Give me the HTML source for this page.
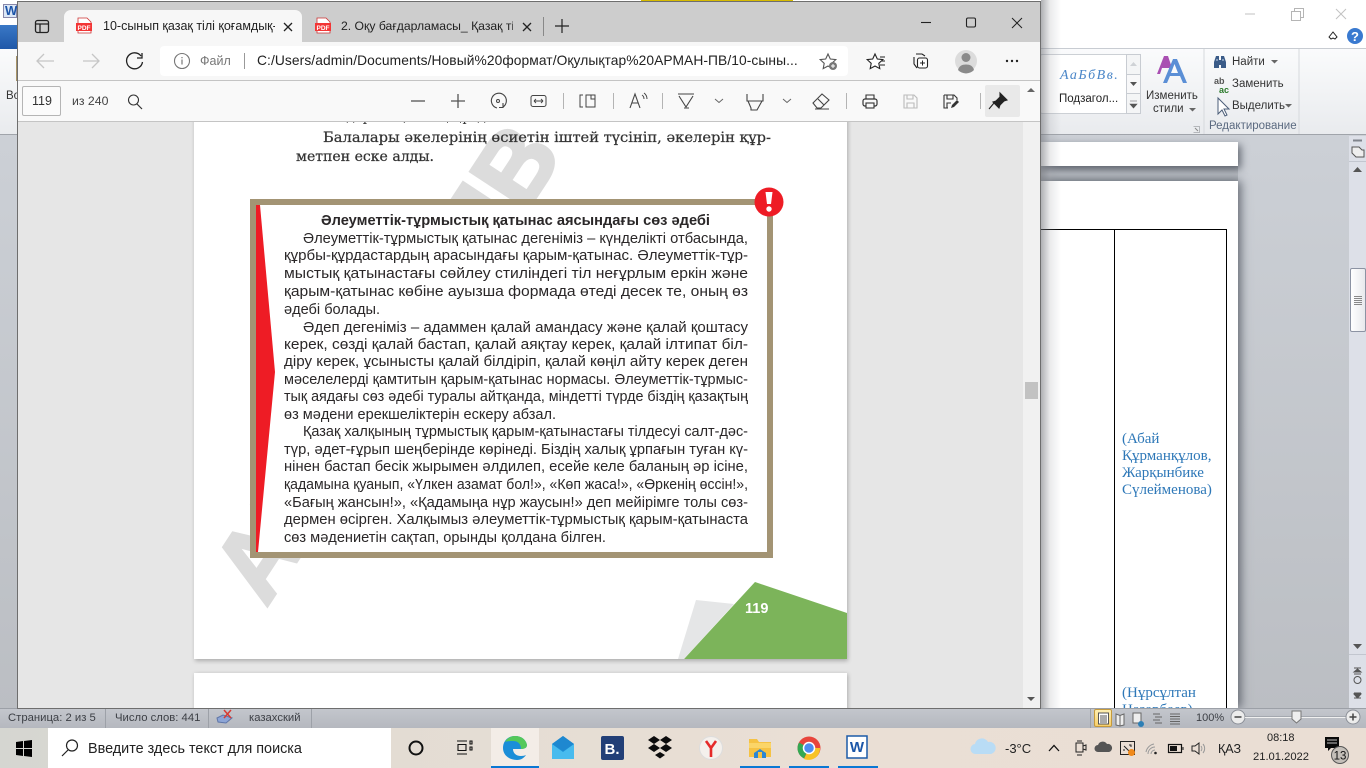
<!DOCTYPE html>
<html lang="kk"><head><meta charset="utf-8"><title>Word and Edge PDF</title>
<style>
html,body{margin:0;padding:0;width:1366px;height:768px;overflow:hidden;background:#c8ccd2;font-family:"Liberation Sans","DejaVu Sans",sans-serif}
div,span{box-sizing:border-box}
.a{position:absolute}
.t{position:absolute;white-space:nowrap;line-height:16px}
svg{position:absolute;overflow:visible}
.bx text{font-family:"Liberation Sans","DejaVu Sans",sans-serif;font-size:14.6px;fill:#2a2728}
</style></head><body>

<!-- WORD BACKGROUND -->
<div class="a" style="left:0;top:0;width:1366px;height:48px;background:#fff"></div>
<div class="a" style="left:0;top:48px;width:1366px;height:87px;background:linear-gradient(#fafbfc,#e9ebee);border-bottom:1px solid #a0a4aa;border-top:1px solid #c8ccd2"></div>
<div class="a" style="left:0;top:135px;width:1366px;height:573px;background:linear-gradient(#ccd0d6,#bbbec3)"></div>

<!-- left part -->
<div class="a" style="left:3px;top:4px;width:14px;height:14px;background:#dbe7f6;border:1px solid #88a;"></div>
<div class="t" style="left:5px;top:3px;font:bold 13px/16px 'Liberation Sans';color:#1c54a8">W</div>
<div class="a" style="left:0;top:25px;width:17px;height:24px;background:linear-gradient(#3a78c6,#1f58a8)"></div>
<div class="a" style="left:16px;top:56px;width:2px;height:25px;background:#a89468"></div>
<div class="t" style="left:6px;top:88px;font-size:11.5px;color:#333">Во</div>

<!-- ribbon right -->
<div class="a" style="left:1040px;top:54px;width:101px;height:60px;background:#fff;border:1px solid #ccd0d5;border-radius:2px"></div>
<div class="a" style="left:1126px;top:54px;width:15px;height:60px;background:#f4f5f6;border:1px solid #c8ccd2"></div>
<div class="a" style="left:1126px;top:74px;width:15px;height:20px;background:#f8f8f9;border:1px solid #c8ccd2"></div>
<svg style="left:0;top:0" width="1" height="1">
<path d="M1130 66l3.500-4 3.500 4z" fill="#cfd2d6"/><path d="M1130 82h7l-3.500 4z" fill="#555"/>
<path d="M1130 101h7M1130 104h7l-3.500 4z" fill="#555" stroke="#555" stroke-width=".6"/>
<path d="M1193.500 126.500h6v6h-6" fill="none" stroke="#b4b7bb"/><path d="M1195 128l3 3" stroke="#888"/>
<path d="M1204 49v85M1299 49v85" stroke="#d6d9dd"/>
<!-- change styles icon -->
<path d="M1157 74l7-18h4l6 18h-3l-2-6h-7l-2 6z" fill="#a94fb2"/>
<path d="M1163 83l10-24h4l10 24h-4l-3-7h-10l-3 7z" fill="#5b8fd6"/>
<path d="M1171 73h7l-3.500-9z" fill="#fafbfc"/>
<path d="M1189 108h7l-3.500 3.500z" fill="#666"/>
<!-- binoculars -->
<path d="M1214 62l2-6h3v4h2v-4h3l2 6v6h-5v-3h-2v3h-5z" fill="#3a5b88"/><path d="M1216 60h2M1222 60h2" stroke="#c8d8ec"/>
<path d="M1271 60h7l-3.500 3.500zM1285 104h7l-3.500 3.500z" fill="#666"/>
<path d="M1218 98l0 16 4-4 3 6 2-1-3-6 5 0z" fill="#fff" stroke="#4b5d78"/>
<!-- title bar buttons -->
<path d="M1245 14h10" stroke="#c2c2c2" stroke-width="1"/>
<path d="M1291.500 11.500h9v9h-9zM1294.500 11.500v-3h9v9h-3" fill="none" stroke="#b5b5b5"/>
<path d="M1336 9l10 10M1346 9l-10 10" stroke="#c2c2c2"/>
<path d="M1329 37l4-5 4 5-2 2-2-1-2 1z" fill="none" stroke="#222"/>
<circle cx="1355" cy="36" r="8" fill="#3a7ad0"/>
<text x="1355" y="41" text-anchor="middle" font-family="Liberation Sans" font-weight="bold" font-size="13" fill="#fff">?</text>
</svg>
<div class="t" style="left:1060px;top:68px;font:italic 14px/16px 'Liberation Serif';letter-spacing:1.5px;color:#4a86c8">АаБбВв.</div>
<div class="t" style="left:1059px;top:91px;font-size:11.500px;color:#222">Подзагол...</div>
<div class="t" style="left:1146px;top:88px;font-size:11.500px;color:#333">Изменить</div>
<div class="t" style="left:1153px;top:101px;font-size:11.500px;color:#333">стили</div>
<div class="t" style="left:1232px;top:54px;font-size:11.500px;color:#333">Найти</div>
<div class="t" style="left:1232px;top:76px;font-size:11.500px;color:#333">Заменить</div>
<div class="t" style="left:1232px;top:98px;font-size:11.500px;color:#333">Выделить</div>
<div class="t" style="left:1209px;top:118px;font-size:11.500px;color:#5b6a80">Редактирование</div>
<div class="t" style="left:1214px;top:77px;font:bold 9px/9px 'Liberation Sans';color:#555">ab</div>
<div class="t" style="left:1219px;top:86px;font:bold 9px/9px 'Liberation Sans';color:#2c7a2c">ac</div>

<!-- Word pages -->
<div class="a" style="left:1040px;top:166px;width:198px;height:15px;background:linear-gradient(#a0a5ab,#b8bcc2 55%,#a6abb1)"></div>
<div class="a" style="left:1040px;top:142px;width:198px;height:24px;background:#fff;box-shadow:3px 3px 8px rgba(70,75,85,.75)"></div>
<div class="a" style="left:1040px;top:181px;width:198px;height:527px;background:#fff;box-shadow:3px 0 9px rgba(70,75,85,.75)"></div>
<div class="a" style="left:1040px;top:229px;width:187px;height:479px;border-top:1px solid #000;border-right:1px solid #000"></div>
<div class="a" style="left:1114px;top:229px;width:1px;height:479px;background:#000"></div>
<div class="t" style="left:1122px;top:431px;font:15px/16px 'Liberation Serif';color:#2e78b8">(Абай</div>
<div class="t" style="left:1122px;top:448px;font:15px/16px 'Liberation Serif';color:#2e78b8">Құрманқұлов,</div>
<div class="t" style="left:1122px;top:465px;font:15px/16px 'Liberation Serif';color:#2e78b8">Жарқынбике</div>
<div class="t" style="left:1122px;top:482px;font:15px/16px 'Liberation Serif';color:#2e78b8">Сүлейменова)</div>
<div class="t" style="left:1122px;top:685px;font:15px/16px 'Liberation Serif';color:#2e78b8">(Нұрсұлтан</div>
<div class="a" style="left:1116px;top:702px;width:110px;height:6px;overflow:hidden"><div class="t" style="left:6px;top:0;font:15px/16px 'Liberation Serif';color:#2e78b8">Назарбаев)</div></div>
<div class="a" style="left:1041px;top:0;width:20px;height:708px;background:linear-gradient(90deg,rgba(110,112,118,.55),rgba(150,152,158,.2) 45%,rgba(255,255,255,0))"></div>

<!-- Word scrollbar -->
<div class="a" style="left:1349px;top:136px;width:17px;height:572px;background:#dde0e8"></div>
<div class="a" style="left:1350px;top:268px;width:16px;height:64px;background:linear-gradient(90deg,#fff,#e8e9ec);border:1px solid #8c93a3;border-radius:2px"></div>
<svg style="left:0;top:0" width="1" height="1">
<path d="M1353 140.500h9" stroke="#80848c" stroke-width="2"/>
<path d="M1352 147h7l3 3h2v7h-8l-4-4z" fill="#eee" stroke="#555"/>
<path d="M1349 161.500h17M1349 654.500h17" stroke="#c2c6cf"/>
<path d="M1353 172l4.500-5 4.500 5z" fill="#555"/>
<path d="M1354 296.500h8M1354 298.500h8M1354 300.500h8M1354 302.500h8M1354 304.500h8" stroke="#888"/>
<path d="M1353 644h9l-4.500 5z" fill="#555"/>
<path d="M1354 668h7M1354 672l3.500-3 3.500 3zM1354 674h7" fill="#555" stroke="#555"/>
<circle cx="1357.500" cy="680" r="3.500" fill="none" stroke="#555"/>
<path d="M1354 693h7M1354 694l3.500 4 3.500-4zM1354 698h7" fill="#555" stroke="#555"/>
</svg>

<!-- Word status -->
<div class="a" style="left:0;top:708px;width:1366px;height:20px;background:linear-gradient(#c3c6cc,#b5b8bf);border-top:1px solid #9ca0a7"></div>
<div class="t" style="left:8px;top:709px;font-size:11.300px;color:#3c3f45;line-height:18px">Страница: 2 из 5</div>
<div class="t" style="left:115px;top:709px;font-size:11.300px;color:#3c3f45;line-height:18px">Число слов: 441</div>
<div class="t" style="left:249px;top:709px;font-size:11.300px;color:#3c3f45;line-height:18px">казахский</div>
<div class="t" style="left:1196px;top:709px;font-size:11px;color:#3c3f45;line-height:18px">100%</div>
<div class="a" style="left:1094px;top:709px;width:18px;height:18px;background:linear-gradient(#fdeeb0,#f8cf6a);border:1px solid #c59a3c;border-radius:2px"></div>
<svg style="left:0;top:0" width="1" height="1">
<path d="M105.500 709v19M208.500 709v19M311.500 709v19M1090.500 709v19" stroke="#9da1a8"/>
<path d="M217 718l6-3 9 3-6 5-8-1z" fill="#8da5d6" stroke="#5f76a8"/><path d="M224 710l7 8M231 710l-7 8" stroke="#d83a32" stroke-width="1.500"/>
<path d="M1098.500 713h10v11h-10zM1100 716h7M1100 718h7M1100 720h7M1100 722h7" fill="#fff" stroke="#555"/>
<path d="M1116 714l4 1.500 4-1.500v11l-4 1-4-1zM1120 715v11" fill="#eee" stroke="#666"/>
<path d="M1133 713h8v10h-8z" fill="#eee" stroke="#666"/><circle cx="1141" cy="724" r="3" fill="#2d7fb5"/>
<path d="M1153 714h7M1155 717h7M1153 720h7M1155 723h7M1170 714h10M1170 716.500h10M1170 719h10M1170 721.500h10M1170 724h10" stroke="#666"/>
<circle cx="1238" cy="717" r="7" fill="#ececec" stroke="#8c9098"/><path d="M1234.500 717h7" stroke="#444" stroke-width="1.500"/>
<path d="M1245 717.500h105" stroke="#f0f0f0"/><path d="M1245 716.500h105" stroke="#8c9098" stroke-width=".6"/>
<path d="M1292 711h9v8l-4.500 4-4.500-4z" fill="#eee" stroke="#777"/>
<circle cx="1353" cy="717" r="7" fill="#ececec" stroke="#8c9098"/><path d="M1349.500 717h7M1353 713.500v7" stroke="#444" stroke-width="1.500"/>
</svg>

<!-- yellow strip -->
<div class="a" style="left:641px;top:0;width:152px;height:1px;background:#d7bb00"></div>

<!-- EDGE WINDOW -->
<div class="a" style="left:17px;top:1px;width:1024px;height:708px;background:#e6e6e6;border:1px solid #6e6e6e;overflow:hidden"></div>
<div class="a" style="left:18px;top:2px;width:1022px;height:40px;background:#cdcdcd"></div>
<div class="a" style="left:64px;top:10px;width:238px;height:33px;background:#f7f7f7;border-radius:7px 7px 0 0"></div>
<div class="a" style="left:18px;top:42px;width:1022px;height:39px;background:#f7f7f7"></div>
<div class="a" style="left:160px;top:46px;width:688px;height:30px;background:#fff;border-radius:4px"></div>
<div class="a" style="left:18px;top:80px;width:1022px;height:42px;background:#f9f9f9;border-top:1px solid #c4c4c4;border-bottom:1px solid #c4c4c4"></div>
<div class="a" style="left:22px;top:86px;width:39px;height:30px;background:#fbfbfb;border:1px solid #b5b5b5;border-radius:2px"></div>
<div class="a" style="left:985px;top:85px;width:35px;height:32px;background:#e9e9e9;border-radius:2px"></div>

<div class="t" style="left:103px;top:18px;width:172px;overflow:hidden;font-size:12.500px;color:#222">10-сынып қазақ тілі қоғамдық-г</div>
<div class="t" style="left:341px;top:18px;width:172px;overflow:hidden;font-size:12.200px;color:#222">2. Оқу бағдарламасы_ Қазақ тіл</div>
<div class="t" style="left:200px;top:53px;font-size:12.500px;color:#777">Файл</div>
<div class="t" style="left:257px;top:53px;font-size:13.800px;letter-spacing:.08px;color:#222">C:/Users/admin/Documents/Новый%20формат/Оқулықтар%20АРМАН-ПВ/10-сыны...</div>
<div class="t" style="left:32px;top:93px;font-size:12.500px;color:#333">119</div>
<div class="t" style="left:72px;top:93px;font-size:12.300px;color:#444">из 240</div>

<svg style="left:0;top:0" width="1" height="1">
<!-- sidebar -->
<rect x="35.500" y="20.500" width="13" height="12" rx="2" fill="none" stroke="#222" stroke-width="1.300"/><path d="M35.500 24h13M40 24v8" stroke="#222" stroke-width="1.300"/>
<!-- pdf icons -->
<path d="M78 18h9l4 4v11H78z" fill="#fff" stroke="#c33" stroke-width=".8"/><rect x="76" y="23" width="16" height="8" fill="#f33535"/>
<path d="M317 18h9l4 4v11h-13z" fill="#fff" stroke="#c33" stroke-width=".8"/><rect x="315" y="23" width="16" height="8" fill="#f33535"/>
<text x="84" y="30" text-anchor="middle" font-family="Liberation Sans" font-weight="bold" font-size="6.500" fill="#fff">PDF</text>
<text x="323" y="30" text-anchor="middle" font-family="Liberation Sans" font-weight="bold" font-size="6.500" fill="#fff">PDF</text>
<path d="M284 23l8 8M292 23l-8 8M523 23l8 8M531 23l-8 8" stroke="#222" stroke-width="1.300"/>
<path d="M543.500 17v19" stroke="#888"/>
<path d="M562 19v14M555 26h14" stroke="#222" stroke-width="1.200"/>
<path d="M921 22.500h10" stroke="#222" stroke-width="1.100"/>
<rect x="966.500" y="18" width="9" height="9" rx="1.500" fill="none" stroke="#222" stroke-width="1.100"/>
<path d="M1012 18l10 10M1022 18l-10 10" stroke="#222"/>
<!-- nav -->
<path d="M38 61h16M44 54l-7 7 7 7" fill="none" stroke="#c6c6c6" stroke-width="1.300"/>
<path d="M83 61h16M92 54l7 7-7 7" fill="none" stroke="#c6c6c6" stroke-width="1.300"/>
<path d="M141 56a8 8 0 1 0 1.500 6M142 53v5h-5" fill="none" stroke="#222" stroke-width="1.300"/>
<circle cx="182" cy="61" r="7.500" fill="none" stroke="#777" stroke-width="1.100"/><path d="M182 59.500v5M182 57v1.200" stroke="#777" stroke-width="1.200"/>
<path d="M244.500 53v16" stroke="#999"/>
<!-- star plus -->
<path d="M828 54l2.300 5 5.500.6-4 3.700 1 5.300-4.800-2.600-4.800 2.600 1-5.300-4-3.700 5.500-.6z" fill="#fff" stroke="#555" stroke-width="1.100"/>
<circle cx="833" cy="66" r="4" fill="#777"/><path d="M831 66h4M833 64v4" stroke="#fff"/>
<!-- favorites -->
<path d="M875 54l2.300 5 5.500.6-4 3.700 1 5.300-4.800-2.600-4.800 2.600 1-5.300-4-3.700 5.500-.6z" fill="#fff" stroke="#222" stroke-width="1.100"/>
<path d="M880 57h5M881 61h4M880 65h5" stroke="#222"/>
<!-- collections -->
<path d="M916 54h6l3 2M914 57v7l3 4" fill="none" stroke="#222" stroke-width="1.100"/>
<rect x="917.500" y="58" width="10" height="10" rx="2" fill="#fff" stroke="#222" stroke-width="1.100"/><path d="M922.500 60.500v5M920 63h5" stroke="#222"/>
<!-- avatar -->
<circle cx="966" cy="61" r="11" fill="#dcdcdc"/><circle cx="966" cy="57.500" r="4.500" fill="#8a8a8a"/><path d="M958 70c1-4 4-5.500 8-5.500s7 1.500 8 5.500a11 11 0 0 1-16 0z" fill="#8a8a8a"/>
<circle cx="1007" cy="61" r="1.200" fill="#222"/><circle cx="1012" cy="61" r="1.200" fill="#222"/><circle cx="1017" cy="61" r="1.200" fill="#222"/>
<!-- pdf toolbar -->
<circle cx="133.500" cy="100" r="5" fill="none" stroke="#333" stroke-width="1.100"/><path d="M137 104l5 5" stroke="#333" stroke-width="1.200"/>
<path d="M411 101h14" stroke="#555" stroke-width="1.300"/>
<path d="M451 101h14M458 94v14" stroke="#555" stroke-width="1.300"/>
<path d="M503 107a7.500 7.500 0 1 0-6 1M503 103v4.500h-4" fill="none" stroke="#444" stroke-width="1.100"/><circle cx="498" cy="101" r="1.500" fill="none" stroke="#444"/>
<rect x="531" y="95.500" width="15" height="11" rx="2" fill="none" stroke="#444"/><path d="M534 101h9M534 101l2-2M534 101l2 2M543 101l-2-2M543 101l-2 2" stroke="#444" fill="none" stroke-width=".9"/>
<path d="M563.500 93v16M613.500 93v16M662.500 93v16M846.500 93v16M980.500 93v16" stroke="#b4b4b4"/>
<path d="M583 95h-3v12h3M586 95h9v12h-9zM591 95v4h4" fill="none" stroke="#444"/>
<path d="M630 108l5-14 5 14M632 103h6" fill="none" stroke="#444" stroke-width="1.100"/><path d="M642 95c1.500 1 2 2 2 4M644 93c2 1.500 3 3.500 3 6" fill="none" stroke="#444"/>
<path d="M678 94h16M679 96l7 11 7-11M684 108h5" fill="none" stroke="#444" stroke-width="1.100"/>
<path d="M715 99l4 3.500 4-3.500M783 99l4 3.500 4-3.500" fill="none" stroke="#666"/>
<path d="M747 94v7h16v-7M748 101l3 7v2h6l5-9" fill="none" stroke="#444" stroke-width="1.100"/>
<path d="M813 103l9-9 7 6-8 8h-4zM818 99l6 6M815 109h14" fill="none" stroke="#444" stroke-width="1.100"/>
<rect x="863" y="99" width="14" height="7" rx="2" fill="none" stroke="#333" stroke-width="1.200"/><path d="M866 99v-4h8v4" fill="none" stroke="#333" stroke-width="1.100"/><rect x="866" y="103" width="8" height="5" fill="#f9f9f9" stroke="#333" stroke-width="1.100"/>
<path d="M904 95h10l3 3v10h-13zM907 95v4h6v-4M907 108v-5h7v5" fill="none" stroke="#bbb" stroke-width="1.100"/>
<path d="M944 95h10l3 3v2M944 95v13h4M947 95v4h6v-4M947 108v-5h4" fill="none" stroke="#333" stroke-width="1.100"/><path d="M951 108l1-3 5-5 2 2-5 5z" fill="#333"/>
<path d="M1000 93l7 7-3 1-4 4-1 3-6-6 3-1 4-4zM994 103l-5 6" fill="#222" stroke="#222" stroke-width="1.100"/>
</svg>

<!-- PDF AREA -->
<div class="a" style="left:18px;top:122px;width:1005px;height:586px;background:#e6e6e6;overflow:hidden">
 <div class="a" style="left:176px;top:-100px;width:653px;height:637px;background:#fff;box-shadow:1px 2px 4px rgba(0,0,0,.25)"></div>
 <div class="a" style="left:176px;top:551px;width:653px;height:60px;background:#fff;box-shadow:1px 1px 4px rgba(0,0,0,.25)"></div>
</div>
<div class="a" style="left:1023px;top:122px;width:17px;height:586px;background:#f1f1f1"></div>
<div class="a" style="left:1025px;top:382px;width:13px;height:17px;background:#c2c2c2"></div>
<div class="a" style="left:1023px;top:82px;width:17px;height:39px;background:#f9f9f9"></div>
<svg style="left:0;top:0" width="1" height="1">
<path d="M1027 92l4-4 4 4z" fill="#666"/><path d="M1027 697h8l-4 4z" fill="#555"/>
</svg>

<!-- page content clip -->
<div class="a" style="left:194px;top:122px;width:653px;height:537px;overflow:hidden">
 <svg style="left:0;top:0" width="653" height="537">
  <text transform="translate(72 486) rotate(-56.7)" font-family="Liberation Sans" font-weight="bold" font-size="100" fill="#dcdcdc" stroke="#dcdcdc" stroke-width="3">АРМАН-ПВ</text>
 </svg>
 <div class="t" style="left:102px;top:-13px;font:13.500px/16px 'DejaVu Serif',serif;color:#333">сөз сөздерімен, оның құндылығын.</div>
</div>
<svg style="left:0;top:0" width="1" height="1" font-family="'DejaVu Serif','Liberation Serif',serif" font-size="14" fill="#333" stroke="#333" stroke-width=".25">
<text x="323" y="142" textLength="448" lengthAdjust="spacingAndGlyphs">Балалары әкелерінің өсиетін іштей түсініп, әкелерін құр-</text>
<text x="296" y="161" textLength="138" lengthAdjust="spacingAndGlyphs">метпен еске алды.</text>
</svg>

<!-- box -->
<div class="a" style="left:250px;top:199px;width:523px;height:359px;background:#fff;border:6px solid #a39474"></div>
<svg style="left:0;top:0" width="1" height="1">
<path d="M256 205h4l15 167-17 180h-2z" fill="#ee1c25"/>
<circle cx="769" cy="202" r="14.500" fill="#ee1c25"/>
<path d="M765.500 192h7l-1.500 12h-4z" fill="#fff"/><circle cx="769" cy="209" r="2.700" fill="#fff"/>
<path d="M684 659l71-77 92 31v46z" fill="#7cb45a"/>
<path d="M678 659l18-59 38 4-50 55z" fill="#e5e6e7"/>
</svg>
<div class="t" style="left:745px;top:601px;font:bold 14.500px/16px 'Liberation Sans';color:#fff">119</div>

<svg class="bx" style="left:0;top:0" width="1" height="1">
<text x="321" y="225" textLength="389" lengthAdjust="spacingAndGlyphs" font-weight="bold">Әлеуметтік-тұрмыстық қатынас аясындағы сөз әдебі</text>
<text x="303" y="243" textLength="445" lengthAdjust="spacingAndGlyphs">Әлеуметтік-тұрмыстық қатынас дегеніміз – күнделікті отбасында,</text>
<text x="284" y="260" textLength="464" lengthAdjust="spacingAndGlyphs">құрбы-құрдастардың арасындағы қарым-қатынас. Әлеуметтік-тұр-</text>
<text x="284" y="278" textLength="464" lengthAdjust="spacingAndGlyphs">мыстық қатынастағы сөйлеу стиліндегі тіл неғұрлым еркін және</text>
<text x="284" y="296" textLength="464" lengthAdjust="spacingAndGlyphs">қарым-қатынас көбіне ауызша формада өтеді десек те, оның өз</text>
<text x="284" y="314" textLength="96" lengthAdjust="spacingAndGlyphs">әдебі болады.</text>
<text x="303" y="332" textLength="445" lengthAdjust="spacingAndGlyphs">Әдеп дегеніміз – адаммен қалай амандасу және қалай қоштасу</text>
<text x="284" y="349" textLength="464" lengthAdjust="spacingAndGlyphs">керек, сөзді қалай бастап, қалай аяқтау керек, қалай ілтипат біл-</text>
<text x="284" y="366" textLength="464" lengthAdjust="spacingAndGlyphs">діру керек, ұсынысты қалай білдіріп, қалай көңіл айту керек деген</text>
<text x="284" y="384" textLength="464" lengthAdjust="spacingAndGlyphs">мәселелерді қамтитын қарым-қатынас нормасы. Әлеуметтік-тұрмыс-</text>
<text x="284" y="401" textLength="464" lengthAdjust="spacingAndGlyphs">тық аядағы сөз әдебі туралы айтқанда, міндетті түрде біздің қазақтың</text>
<text x="284" y="419" textLength="272" lengthAdjust="spacingAndGlyphs">өз мәдени ерекшеліктерін ескеру абзал.</text>
<text x="303" y="436" textLength="445" lengthAdjust="spacingAndGlyphs">Қазақ халқының тұрмыстық қарым-қатынастағы тілдесуі салт-дәс-</text>
<text x="284" y="454" textLength="464" lengthAdjust="spacingAndGlyphs">түр, әдет-ғұрып шеңберінде көрінеді. Біздің халық ұрпағын туған кү-</text>
<text x="284" y="471" textLength="464" lengthAdjust="spacingAndGlyphs">нінен бастап бесік жырымен әлдилеп, есейе келе баланың әр ісіне,</text>
<text x="284" y="489" textLength="464" lengthAdjust="spacingAndGlyphs">қадамына қуанып, «Үлкен азамат бол!», «Көп жаса!», «Өркенің өссін!»,</text>
<text x="284" y="507" textLength="464" lengthAdjust="spacingAndGlyphs">«Бағың жансын!», «Қадамыңа нұр жаусын!» деп мейірімге толы сөз-</text>
<text x="284" y="524" textLength="464" lengthAdjust="spacingAndGlyphs">дермен өсірген. Халқымыз әлеуметтік-тұрмыстық қарым-қатынаста</text>
<text x="284" y="542" textLength="322" lengthAdjust="spacingAndGlyphs">сөз мәдениетін сақтап, орынды қолдана білген.</text>
</svg>

<!-- TASKBAR -->
<div class="a" style="left:0;top:728px;width:1366px;height:40px;background:linear-gradient(90deg,#d5d6d1 0,#e2dcd3 25%,#eadfd5 60%,#eaded4 100%)"></div>
<div class="a" style="left:48px;top:728px;width:343px;height:40px;background:#fff"></div>
<div class="a" style="left:491px;top:728px;width:48px;height:40px;background:#f3ede7;border-bottom:2px solid #0a78d4"></div>
<div class="a" style="left:740px;top:766px;width:40px;height:2px;background:#0a78d4"></div>
<div class="a" style="left:789px;top:766px;width:40px;height:2px;background:#0a78d4"></div>
<div class="a" style="left:838px;top:766px;width:40px;height:2px;background:#0a78d4"></div>
<div class="t" style="left:88px;top:741px;font-size:14.400px;color:#222">Введите здесь текст для поиска</div>
<div class="t" style="left:1005px;top:741px;font-size:13px;color:#222">-3°C</div>
<div class="t" style="left:1218px;top:741px;font-size:12.500px;color:#222">ҚАЗ</div>
<div class="t" style="left:1267px;top:730px;font-size:11px;color:#222">08:18</div>
<div class="t" style="left:1253px;top:749px;font-size:11.200px;color:#222">21.01.2022</div>
<svg style="left:0;top:0" width="1" height="1">
<!-- win -->
<path d="M16 742l7-1v7h-7zM24 741l8-1v8h-8zM16 749h7v7l-7-1zM24 749h8v8l-8-1z" fill="#000"/>
<!-- search -->
<circle cx="72" cy="745.500" r="5.500" fill="none" stroke="#222" stroke-width="1.200"/><path d="M68 750l-6 6" stroke="#222" stroke-width="1.200"/>
<!-- cortana -->
<circle cx="416" cy="748" r="6.500" fill="none" stroke="#111" stroke-width="2"/>
<!-- task view -->
<path d="M457 741h10M457 754h10M458 744.500h8v6h-8zM470 741h2v3h-2zM470 747h2v3h-2z" fill="none" stroke="#111" stroke-width="1.100"/>
<!-- edge -->
<path d="M503 748c0-7 5-12 12-12s11 4 12 9c0 3-3 4-6 4h-8c0 4 3 7 8 7 2 0 4-.5 5-1-2 3-5 5-9 5-8 0-14-5-14-12z" fill="#1b8ed8"/>
<path d="M505 742c2-4 6-6 10-6 7 0 11 4 12 9 0 3-3 4-6 4 0-5-3-8-8-8-3 0-6 0-8 1z" fill="#54c85a"/>
<!-- mail -->
<path d="M552 744l11-8 11 8v15h-22z" fill="#1c93d8"/><path d="M552 744l11 7 11-7-11-8z" fill="#1e88d0"/><path d="M552 759v-15l11 8 11-8v15z" fill="#48bbee"/>
<!-- booking -->
<rect x="601" y="736" width="23" height="24" rx="2" fill="#223f77"/>
<text x="612" y="754" text-anchor="middle" font-family="Liberation Sans" font-weight="bold" font-size="15" fill="#fff">B.</text>
<!-- dropbox -->
<path d="M655 736l6 4-6 4-6-4zM667 736l6 4-6 4-6-4zM655 744l6 4-6 4-6-4zM667 744l6 4-6 4-6-4zM661 752l5 3-5 3.500-5-3.500z" fill="#0c0c0c" transform="translate(-1 0)"/>
<!-- yandex -->
<circle cx="711" cy="748" r="11.500" fill="#f4f0ec" stroke="#ddd"/><path d="M706 741l5 7 5-7M711 748v9" fill="none" stroke="#e52a2a" stroke-width="2.600"/>
<!-- explorer -->
<path d="M749 739h8l2 3h12v15h-22z" fill="#f5c244"/><path d="M749 743h22v5h-22z" fill="#fbd568"/><path d="M754 758v-5l6-4 6 4v5z" fill="#2a86d6"/><rect x="758" y="752" width="4" height="6" fill="#f5c244"/>
<!-- chrome -->
<circle cx="809" cy="748" r="11.500" fill="#e8453c"/><path d="M809 748l-10-5.500a11.500 11.500 0 0 0 5 16z" fill="#34a853"/><path d="M809 748l-5 11a11.500 11.500 0 0 0 16-11z" fill="#f7c325"/><circle cx="809" cy="748" r="5.500" fill="#4d8df0" stroke="#fff" stroke-width="1.500"/>
<!-- word -->
<rect x="847" y="736" width="20" height="22" fill="#fff" stroke="#1c5ba8" stroke-width="1.500"/>
<text x="857" y="752" text-anchor="middle" font-family="Liberation Sans" font-weight="bold" font-size="15" fill="#1b56a8">W</text>
<!-- weather -->
<path d="M976 754a5 5 0 0 1-1-10 7 7 0 0 1 13-2 6 6 0 0 1 3 12z" fill="#b9dcf5"/>
<!-- tray -->
<path d="M1049 751l5-5.500 5 5.500" fill="none" stroke="#111" stroke-width="1.300"/>
<path d="M1076 743h7v9h-7zM1083 746l3-1v5l-3-1M1077 741h5M1077 755h5" fill="none" stroke="#222"/>
<path d="M1098 752a3.500 3.500 0 0 1 0-7 5 5 0 0 1 9-1 4 4 0 0 1 2 8z" fill="#555"/>
<rect x="1120.500" y="741.500" width="14" height="13" fill="none" stroke="#222"/><path d="M1124 746l5 5M1129 745h2v2M1124 751v-2" stroke="#222" fill="none"/><circle cx="1131.500" cy="752.500" r="3.500" fill="#f08a1c"/>
<path d="M1148 754a7 7 0 0 1 7-7M1151 754a4 4 0 0 1 4-4M1146 752a10 10 0 0 1 8-8" fill="none" stroke="#999"/><circle cx="1155.500" cy="753" r="1.300" fill="#222"/>
<rect x="1168.500" y="744.500" width="13" height="8" fill="none" stroke="#111" stroke-width="1.200"/><rect x="1170" y="746" width="7" height="5" fill="#111"/><path d="M1183 747v3" stroke="#111"/>
<path d="M1192 746h3l4-3v11l-4-3h-3z" fill="none" stroke="#222"/><path d="M1201 746a4 4 0 0 1 0 5M1203 744a7 7 0 0 1 0 9" fill="none" stroke="#999"/>
<!-- notif -->
<path d="M1325 737h14v11h-8l-3 3v-3h-3z" fill="#0a0a0a"/><path d="M1327 740h10M1327 743h10" stroke="#fff" stroke-width=".8"/>
<circle cx="1340" cy="755" r="8.500" fill="#c4bfb9" stroke="#555"/>
<text x="1340" y="759.500" text-anchor="middle" font-family="Liberation Sans" font-size="11.500" fill="#111">13</text>
</svg>
</body></html>
